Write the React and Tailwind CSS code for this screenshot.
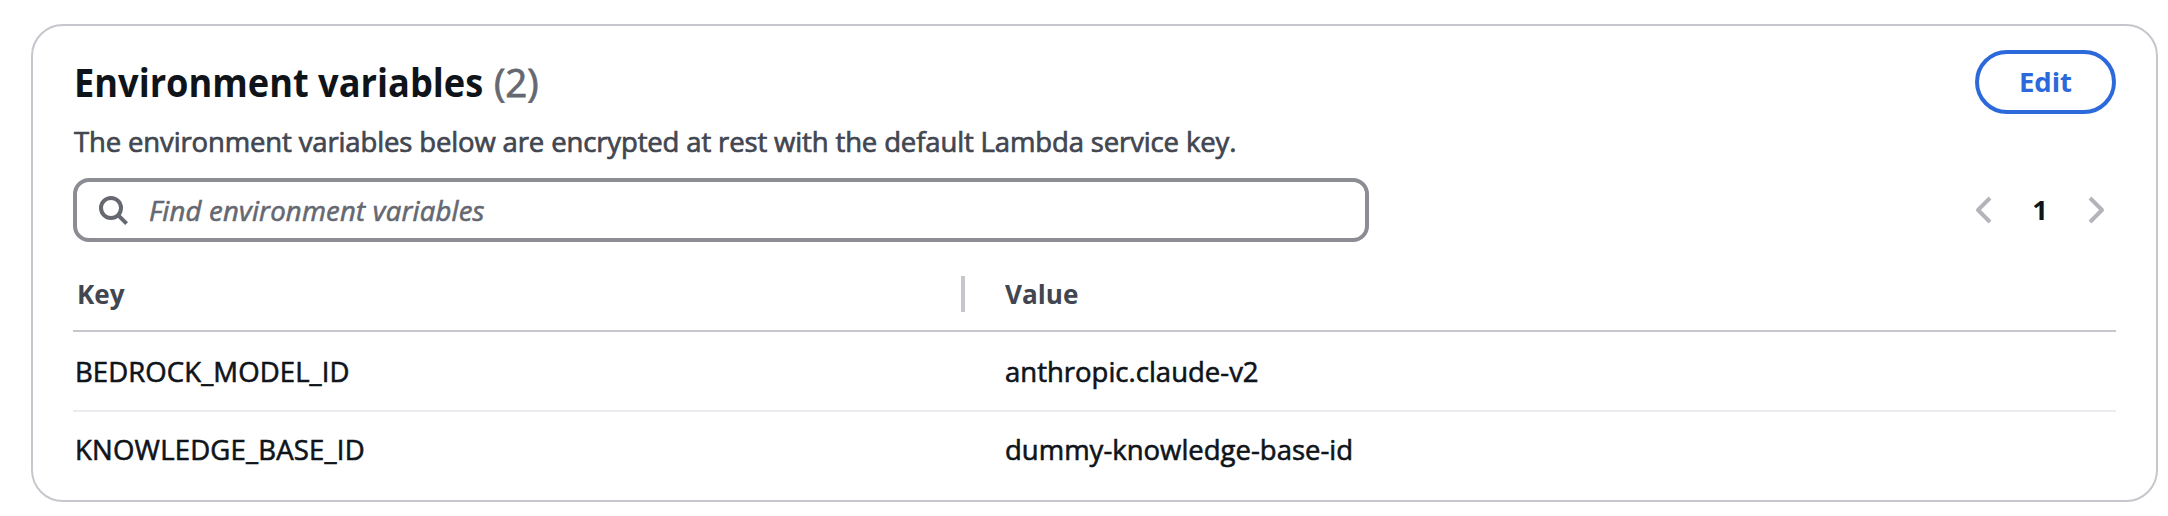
const variables = [
  { key: "BEDROCK_MODEL_ID", value: "anthropic.claude-v2" },
  { key: "KNOWLEDGE_BASE_ID", value: "dummy-knowledge-base-id" },
];

function SearchIcon() {
  return (
    <svg width="32" height="32" viewBox="0 0 32 32" fill="none" stroke="#656871" strokeWidth="4">
      <circle cx="14" cy="14" r="10" />
      <path d="M20.8 20.8L29.6 29.6" />
    </svg>
  );
}

function Chevron({ d }) {
  return (
    <svg width="32" height="32" viewBox="0 0 32 32" fill="none" stroke="#b4b4bb" strokeWidth="4" strokeLinejoin="round">
      <path d={d} />
    </svg>
  );
}

export default function App() {
  return (
    <main className="h-[516px] bg-white pt-6 pl-[31px] font-['Open_Sans','Noto_Sans',sans-serif] text-[27.5px] leading-9 text-[#0f141a]">
      <section className="h-[478px] w-[2127px] rounded-[32px] border-2 border-[#c6c6cd] bg-white px-10 pt-6">
        <header className="flex h-16 items-center justify-between">
          <h2 className="flex items-center pl-px text-[38.5px] leading-[48px] whitespace-nowrap">
            <span className="w-[420px] origin-left scale-x-[0.94] font-bold">Environment variables</span>
            <span className="text-[#656871] [-webkit-text-stroke:0.8px]">(2)</span>
          </h2>
          <button className="flex h-16 w-[141px] items-center justify-center rounded-full border-4 border-[#2c6adb] font-bold text-[#2c6adb]">
            Edit
          </button>
        </header>
        <p className="mt-2.5 pl-px tracking-[-0.14px] text-[#424650] [-webkit-text-stroke:0.7px]">
          The environment variables below are encrypted at rest with the default Lambda service key.
        </p>
        <div className="mt-[18px] flex h-16 items-center justify-between">
          <div className="flex h-16 w-[1296px] items-center gap-5 rounded-2xl border-4 border-[#8c8c94] pl-5 text-[#656871]">
            <SearchIcon />
            <span className="pt-0.5 tracking-[0.22px] italic [-webkit-text-stroke:0.6px]">Find environment variables</span>
          </div>
          <nav className="flex items-center pr-1">
            <Chevron d="M22 4L10 16L22 28" />
            <span className="w-20 text-center font-bold">1</span>
            <Chevron d="M10 4L22 16L10 28" />
          </nav>
        </div>
        <table className="mt-[14px] w-full table-fixed border-separate border-spacing-0 text-left">
          <thead className="text-[#424650]">
            <tr className="h-[76px]">
              <th className="w-[892px] border-b-2 border-[#c6c6cd] p-0 pt-0.5">
                <div className="flex h-9 items-center justify-between border-r-4 border-[#c6c6cd] pl-1">
                  <span className="origin-left scale-x-[0.95]">Key</span>
                </div>
              </th>
              <th className="border-b-2 border-[#c6c6cd] p-0 pt-0.5 pl-10">
                <span className="inline-block origin-left scale-x-[0.95]">Value</span>
              </th>
            </tr>
          </thead>
          <tbody className="[-webkit-text-stroke:0.6px]">
            {variables.map((item, i) => (
              <tr key={item.key} className={i === 0 ? "h-20" : "h-[75px]"}>
                <td className={i === 0 ? "border-b-2 border-[#ebebf0] p-0 pt-0.5 pl-0.5 tracking-[0.1px]" : "p-0 pl-0.5 tracking-[0.2px]"}>{item.key}</td>
                <td className={i === 0 ? "border-b-2 border-[#ebebf0] p-0 pt-0.5 pl-10" : "p-0 pl-10"}>{item.value}</td>
              </tr>
            ))}
          </tbody>
        </table>
      </section>
    </main>
  );
}
